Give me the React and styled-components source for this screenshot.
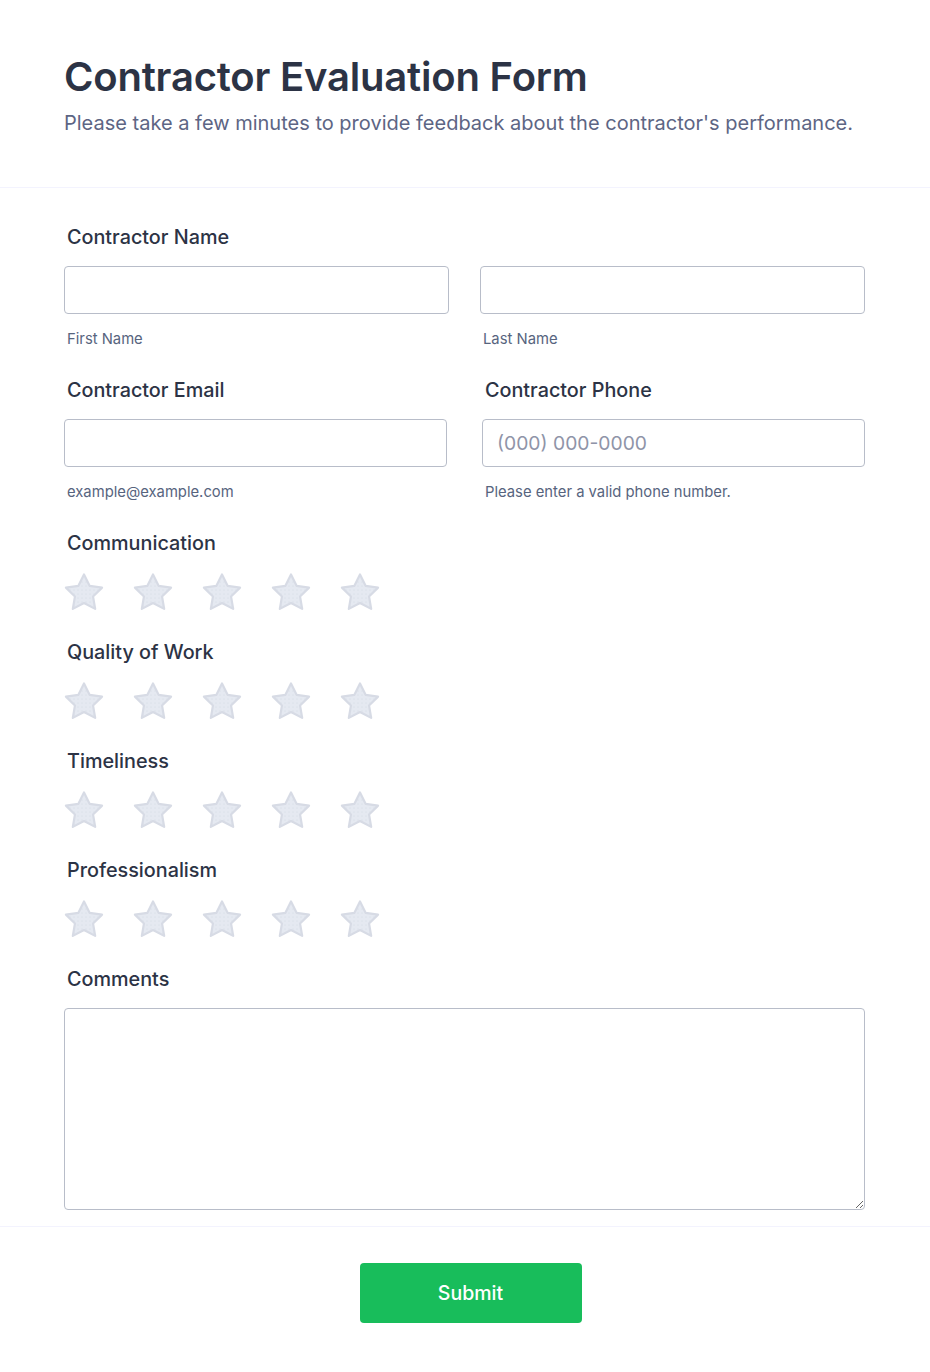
import React from "react";
import styled, { createGlobalStyle } from "styled-components";

const Global = createGlobalStyle`
  * { box-sizing: border-box; }
  body { margin: 0; background: #fff; font-family: Inter, "Noto Sans", sans-serif; color: #2c3345; }
`;

const Page = styled.div`
  width: 930px;
  background: #fff;
`;

const Header = styled.header`
  padding: 52px 64px 50px;
  border-bottom: 1px solid #f3f3fe;
`;

const Title = styled.h1`
  margin: 0;
  font-size: 40px;
  line-height: 50px;
  font-weight: 600;
  color: #2c3345;
  letter-spacing: -0.2px;
`;

const Subtitle = styled.p`
  margin: 7px 0 0;
  font-size: 20px;
  line-height: 28px;
  color: #5d6584;
`;

const Form = styled.div`
  padding: 36px 65px 16px 64px;
  display: flex;
  flex-direction: column;
`;

const Field = styled.div`
  display: flex;
  flex-direction: column;
  padding-bottom: ${(p) => p.$pb || 0}px;
`;

const Label = styled.div`
  font-size: 19.8px;
  line-height: 26px;
  font-weight: 500;
  color: #2c3345;
  padding-left: 3px;
  margin-bottom: 16px;
`;

const Row = styled.div`
  display: grid;
  grid-template-columns: 1fr 1fr;
  column-gap: ${(p) => p.$gap}px;
`;

const Col = styled.div`
  display: flex;
  flex-direction: column;
`;

const Input = styled.input`
  height: 48px;
  width: 100%;
  border: 1px solid #b8bdc9;
  border-radius: 4px;
  padding: 0 14px;
  font-family: Inter, sans-serif;
  font-size: 19.3px;
  color: #2c3345;
  background: #fff;
  outline: none;
  &::placeholder { color: #8f94a8; }
`;

const Sub = styled.div`
  font-size: 14.8px;
  line-height: 18px;
  color: #57647e;
  padding-left: 3px;
  margin-top: 16px;
`;

const Stars = styled.div`
  display: flex;
  gap: 29px;
`;

const StarBox = styled.svg`
  width: 40px;
  height: 40px;
  display: block;
  overflow: visible;
`;

const Star = () => (
  <StarBox viewBox="0 0 40 40">
    <defs>
      <pattern id="dots" width="4" height="4" patternUnits="userSpaceOnUse">
        <rect width="4" height="4" fill="#e5e9f1" />
        <circle cx="2" cy="2" r="0.5" fill="#d1d7e3" />
      </pattern>
    </defs>
    <path
      d="M20 2.5 L25.59 13.81 L38.07 15.63 L29.03 24.44 L31.17 36.87 L20 31 L8.83 36.87 L10.97 24.44 L1.93 15.63 L14.41 13.81 Z"
      fill="url(#dots)"
      stroke="#d7dbe5"
      strokeWidth="2.2"
      strokeLinejoin="round"
    />
  </StarBox>
);

const TextArea = styled.textarea`
  height: 202px;
  width: 100%;
  border: 1px solid #b8bdc9;
  border-radius: 4px;
  resize: vertical;
  font-family: Inter, sans-serif;
  font-size: 16px;
  padding: 12px 14px;
  outline: none;
`;

const Footer = styled.div`
  border-top: 1px solid #f3f3fe;
  padding: 36px 0 50px;
  display: flex;
  justify-content: center;
`;

const Submit = styled.button`
  width: 222px;
  height: 60px;
  margin-left: 11px;
  border: none;
  border-radius: 4px;
  background: #18bd5b;
  color: #fff;
  font-family: Inter, sans-serif;
  font-size: 19.5px;
  font-weight: 500;
  cursor: pointer;
`;

const ratings = ["Communication", "Quality of Work", "Timeliness", "Professionalism"];

export default function App() {
  return (
    <Page>
      <Global />
      <Header>
        <Title>Contractor Evaluation Form</Title>
        <Subtitle>Please take a few minutes to provide feedback about the contractor's performance.</Subtitle>
      </Header>
      <Form>
        <Field $pb={29}>
          <Label>Contractor Name</Label>
          <Row $gap={31}>
            <Col>
              <Input />
              <Sub>First Name</Sub>
            </Col>
            <Col>
              <Input />
              <Sub>Last Name</Sub>
            </Col>
          </Row>
        </Field>
        <Row $gap={35}>
          <Field $pb={29}>
            <Label>Contractor Email</Label>
            <Input />
            <Sub>example@example.com</Sub>
          </Field>
          <Field $pb={29}>
            <Label>Contractor Phone</Label>
            <Input placeholder="(000) 000-0000" />
            <Sub>Please enter a valid phone number.</Sub>
          </Field>
        </Row>
        {ratings.map((r) => (
          <Field key={r} $pb={27}>
            <Label>{r}</Label>
            <Stars>
              {[0, 1, 2, 3, 4].map((i) => (
                <Star key={i} />
              ))}
            </Stars>
          </Field>
        ))}
        <Field>
          <Label>Comments</Label>
          <TextArea />
        </Field>
      </Form>
      <Footer>
        <Submit>Submit</Submit>
      </Footer>
    </Page>
  );
}
